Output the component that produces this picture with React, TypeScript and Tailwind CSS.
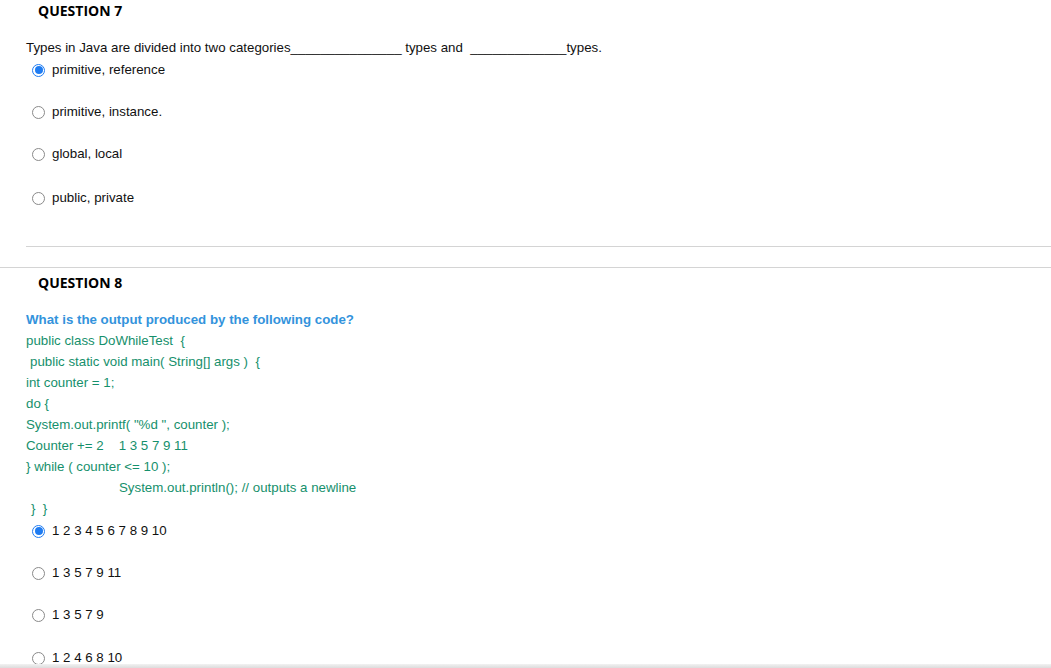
import React from 'react';

const body = { fontFamily: '"Liberation Sans", Arial, sans-serif' };
const heading = { fontFamily: '"Open Sans", "Liberation Sans", sans-serif' };

function Radio({ checked = false }: { checked?: boolean }) {
  if (checked) {
    return (
      <span className="inline-flex h-[13px] w-[13px] shrink-0 items-center justify-center rounded-full border border-[#1f7cf2] bg-white">
        <span className="h-[8px] w-[8px] rounded-full bg-[#1f7cf2]" />
      </span>
    );
  }
  return <span className="inline-block h-[13px] w-[13px] shrink-0 rounded-full border border-[#8a8a8a] bg-white" />;
}

function Option({ label, checked, className = '' }: { label: string; checked?: boolean; className?: string }) {
  return (
    <div className={`flex h-[22px] items-center gap-[7px] pl-[32px] text-[13.3px] text-[#111] ${className}`}>
      <Radio checked={checked} />
      <span>{label}</span>
    </div>
  );
}

const code = [
  { text: 'public class DoWhileTest  {', indent: 'pl-[26px]' },
  { text: 'public static void main( String[] args )  {', indent: 'pl-[30px]' },
  { text: 'int counter = 1;', indent: 'pl-[26px]' },
  { text: 'do {', indent: 'pl-[26px]' },
  { text: 'System.out.printf( "%d ", counter );', indent: 'pl-[26px]' },
  { text: 'Counter += 2', extra: '1 3 5 7 9 11', indent: 'pl-[26px]' },
  { text: '} while ( counter <= 10 );', indent: 'pl-[26px]' },
  { text: 'System.out.println(); // outputs a newline', indent: 'pl-[119px]' },
  { text: '}  }', indent: 'pl-[31px]' },
];

export default function App() {
  return (
    <div className="relative h-[668px] w-full overflow-hidden bg-white" style={body}>
      {/* question 7 */}
      <div className="pt-[1px]">
        <div className="h-5 pl-[38px] text-[14px] font-bold leading-5 text-black" style={heading}>
          QUESTION 7
        </div>
        <p className="mt-[16px] whitespace-pre pl-[26px] text-[13.3px] leading-[21px] text-[#111]">
          {'Types in Java are divided into two categories_______________ types and  _____________types.'}
        </p>
        <Option label="primitive, reference" checked className="mt-[1px] mb-[20px]" />
        <Option label="primitive, instance." className="mb-[20px]" />
        <Option label="global, local" className="mb-[22px]" />
        <Option label="public, private" />
      </div>

      <div className="mt-[37px] ml-[26px] h-px bg-[#d4d4d4]" />
      <div className="mt-[20px] h-px bg-[#d4d4d4]" />

      {/* question 8 */}
      <div>
        <div className="mt-[5px] h-5 pl-[38px] text-[14px] font-bold leading-5 text-black" style={heading}>
          QUESTION 8
        </div>
        <p className="mt-[16px] pl-[26px] text-[13.3px] font-bold leading-[21px] text-[#3393dc]">
          What is the output produced by the following code?
        </p>
        <div className="text-[13.3px] leading-[21px] text-[#16906c]">
          {code.map((line) => (
            <div key={line.text} className={`whitespace-pre ${line.indent}`}>
              {line.text}
              {line.extra && <span className="ml-[15px]">{line.extra}</span>}
            </div>
          ))}
        </div>
        <Option label="1 2 3 4 5 6 7 8 9 10" checked className="mt-[1px] mb-[20px]" />
        <Option label="1 3 5 7 9 11" className="mb-[20px]" />
        <Option label="1 3 5 7 9" className="mb-[21px]" />
        <Option label="1 2 4 6 8 10" />
      </div>

      <div className="absolute inset-x-0 bottom-0 h-[4px] bg-gradient-to-b from-[#f2f2f2] to-[#dcdcdc]" />
    </div>
  );
}
